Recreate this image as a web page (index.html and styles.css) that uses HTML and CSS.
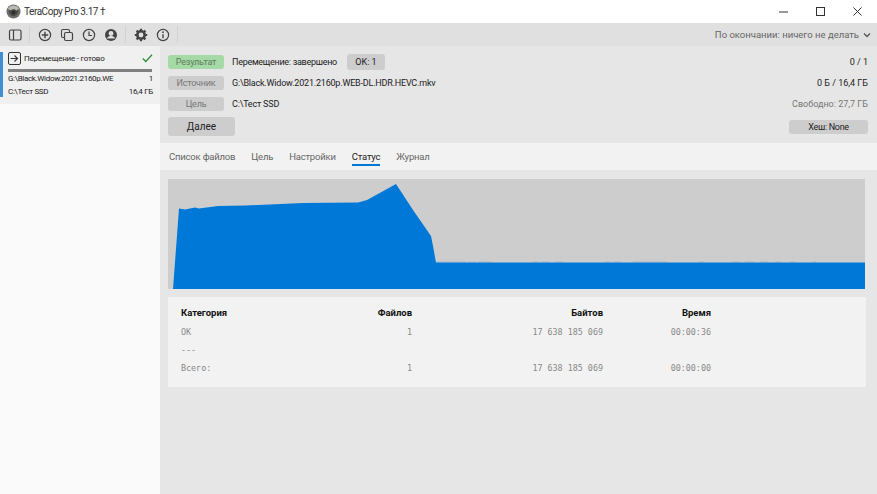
FILE: index.html
```html
<!DOCTYPE html>
<html lang="ru">
<head>
<meta charset="utf-8">
<title>TeraCopy Pro</title>
<link rel="stylesheet" href="styles.css">
</head>
<body>
<div class="app">
  <header class="titlebar">
    <div class="title-left">
      <svg class="logo" width="15" height="15" viewBox="0 0 16 16"><circle cx="8" cy="8" r="7.500" fill="#6f6f6a"/><circle cx="8" cy="8" r="5" fill="#4a4a48"/><path d="M2 5a7 7 0 0 1 12 0l-3 2a4 4 0 0 0-6 0z" fill="#b9b9b2"/><circle cx="8" cy="9" r="2" fill="#2e2e2e"/></svg>
      <span class="title-text">TeraCopy Pro 3.17 †</span>
    </div>
    <div class="win-controls">
      <svg width="10" height="10" viewBox="0 0 10 10"><path d="M0 5h9" stroke="#333" fill="none"/></svg>
      <svg width="10" height="10" viewBox="0 0 10 10"><rect x=".5" y=".5" width="8" height="8" stroke="#333" fill="none"/></svg>
      <svg width="10" height="10" viewBox="0 0 10 10"><path d="M.5.5l8 8M8.500.5l-8 8" stroke="#333" fill="none"/></svg>
    </div>
  </header>
  <nav class="toolbar">
    <div class="tool-group">
      <svg class="icon" width="14" height="14" viewBox="0 0 14 14"><rect x="1.500" y="2" width="11.500" height="10" rx="1.500" fill="none" stroke="#444" stroke-width="1.200"/><path d="M5.500 2v10" stroke="#444" stroke-width="1.200"/></svg>
    </div>
    <div class="tool-group">
      <svg class="icon" width="14" height="14" viewBox="0 0 14 14"><circle cx="7" cy="7" r="5.600" fill="none" stroke="#444" stroke-width="1.200"/><path d="M7 3.800v6.400M3.800 7h6.400" stroke="#444" stroke-width="1.400"/></svg>
      <svg class="icon" width="14" height="14" viewBox="0 0 14 14"><rect x="1.500" y="1.500" width="8" height="8" rx="1.500" fill="none" stroke="#444" stroke-width="1.100"/><rect x="4.500" y="4.500" width="8" height="8" rx="1.500" fill="#e0e0e0" stroke="#444" stroke-width="1.200"/></svg>
      <svg class="icon" width="14" height="14" viewBox="0 0 14 14"><circle cx="7" cy="7" r="5.600" fill="none" stroke="#444" stroke-width="1.200"/><path d="M7 3.500V7.500h3" fill="none" stroke="#444" stroke-width="1.200"/></svg>
      <svg class="icon" width="14" height="14" viewBox="0 0 14 14"><circle cx="7" cy="7" r="6" fill="#444"/><circle cx="7" cy="5.500" r="2.400" fill="#e0e0e0"/><path d="M2.800 10.500c1-2 2.600-2.400 4.200-2.400s3.200.4 4.200 2.400z" fill="#e0e0e0"/></svg>
    </div>
    <div class="tool-group">
      <svg class="icon" width="14" height="14" viewBox="0 0 14 14"><circle cx="7" cy="7" r="3.700" fill="none" stroke="#444" stroke-width="2.600"/><path d="M7 .8v2.500M7 10.700v2.500M.8 7h2.500M10.700 7h2.500M2.600 2.600l1.800 1.800M9.600 9.600l1.800 1.800M11.400 2.600L9.600 4.400M4.400 9.600l-1.800 1.800" stroke="#444" stroke-width="2.200"/></svg>
      <svg class="icon" width="14" height="14" viewBox="0 0 14 14"><circle cx="7" cy="7" r="5.600" fill="none" stroke="#444" stroke-width="1.200"/><path d="M7 6.200v4" stroke="#444" stroke-width="1.400"/><circle cx="7" cy="4.200" r=".9" fill="#444"/></svg>
    </div>
    <div class="after-done">По окончании: ничего не делать
      <svg width="8" height="6" viewBox="0 0 8 6"><path d="M1 1.500l3 3 3-3" fill="none" stroke="#555" stroke-width="1.300"/></svg>
    </div>
  </nav>
  <div class="body">
    <aside class="sidebar">
      <div class="job">
        <div class="job-inner">
          <div class="job-head">
            <svg width="13" height="13" viewBox="0 0 13 13"><rect x=".5" y=".5" width="12" height="12" rx="1.500" fill="none" stroke="#333"/><path d="M2.500 6.500h7M6.500 3.500l3 3-3 3" fill="none" stroke="#333" stroke-width="1.100"/></svg>
            <span class="job-name">Перемещение - готово</span>
            <svg class="check" width="11" height="9" viewBox="0 0 11 9"><path d="M.8 4.500l3 3 6.200-6.800" fill="none" stroke="#2e8b3a" stroke-width="1.300"/></svg>
          </div>
          <div class="job-bar"></div>
          <div class="job-row"><span>G:\Black.Widow.2021.2160p.WE</span><span>1</span></div>
          <div class="job-row"><span>C:\Тест SSD</span><span>16,4 ГБ</span></div>
        </div>
      </div>
    </aside>
    <main class="main">
      <section class="summary">
        <div class="sum-row">
          <span class="tag tag-green">Результат</span>
          <span class="sum-text sum-tight">Перемещение: завершено</span>
          <span class="ok">OK: 1</span>
          <span class="sum-right">0 / 1</span>
        </div>
        <div class="sum-row">
          <span class="tag">Источник</span>
          <span class="sum-text">G:\Black.Widow.2021.2160p.WEB-DL.HDR.HEVC.mkv</span>
          <span class="sum-right">0 Б / 16,4 ГБ</span>
        </div>
        <div class="sum-row">
          <span class="tag">Цель</span>
          <span class="sum-text">C:\Тест SSD</span>
          <span class="sum-right sum-muted">Свободно: 27,7 ГБ</span>
        </div>
        <div class="sum-row sum-row-last">
          <span class="next">Далее</span>
          <span class="hash">Хеш: None</span>
        </div>
      </section>
      <div class="tabs">
        <span class="tab">Список файлов</span>
        <span class="tab">Цель</span>
        <span class="tab">Настройки</span>
        <span class="tab tab-active">Статус</span>
        <span class="tab">Журнал</span>
      </div>
      <section class="content">
        <svg class="chart" width="697" height="110" viewBox="168 179 697 110" preserveAspectRatio="none">
          <rect x="168" y="179" width="697" height="110" fill="#cdcdcd"/>
          <polygon fill="#0078d7" points="173,289 179,208.500 185,209.500 195,207.500 199,208.500 218,206 245,205.500 258,205 303,203 358,202.500 367,200 396,184 413,210 431,236 433,246 436,262.500 865,262.500 865,289"/>
          <path d="M436 262h30M468 262h8M478 262h14M533 262h5M541 262h9M555 262h8M605 262h6M613 262h8M633 262h34M698 262h6M732 262h8M745 262h9M760 262h8M775 262h6M790 262h5M813 262h3" stroke="#0078d7" stroke-opacity=".2" fill="none"/>
        </svg>
        <div class="stats">
          <div class="stats-grid">
            <span class="th">Категория</span><span class="th r">Файлов</span><span class="th r">Байтов</span><span class="th r">Время</span>
            <span class="td">OK</span><span class="td r">1</span><span class="td r">17 638 185 069</span><span class="td r">00:00:36</span>
            <span class="td">---</span><span class="td r"></span><span class="td r"></span><span class="td r"></span>
            <span class="td">Всего:</span><span class="td r">1</span><span class="td r">17 638 185 069</span><span class="td r">00:00:00</span>
          </div>
        </div>
      </section>
    </main>
  </div>
</div>
</body>
</html>
```

FILE: styles.css
```css
* { box-sizing: border-box; }
html, body { margin: 0; height: 100%; }
body { font-family: Roboto, "Open Sans", sans-serif; font-size: 9px; color: #222; background: #fff; overflow: hidden; }
.app { display: flex; flex-direction: column; width: 877px; height: 494px; }
.titlebar { height: 23px; display: flex; align-items: center; justify-content: space-between; background: #fff; padding-left: 6px; flex: none; }
.title-left { display: flex; align-items: center; gap: 3px; }
.title-text { font-size: 10px; letter-spacing: -.45px; color: #333; }
.win-controls { display: flex; gap: 27px; padding-right: 14px; align-items: center; }
.toolbar { height: 23px; background: #e0e0e0; display: flex; align-items: center; flex: none; padding-left: 8px; }
.tool-group { display: flex; align-items: center; gap: 8px; padding-right: 7px; margin-right: 8px; height: 17px; border-right: 1px solid #d2d2d2; }
.after-done { margin-left: auto; color: #666; font-size: 9.500px; padding-right: 6px; display: flex; align-items: center; gap: 4px; }
.body { flex: 1; display: flex; min-height: 0; }
.sidebar { width: 160px; background: #fafafa; flex: none; }
.job { height: 58px; background: #f0f0f0; padding-top: 6px; }
.job-inner { border-left: 3px solid #3f8fd2; padding: 0 4px 0 5px; height: 45px; }
.job-head { display: flex; align-items: center; gap: 3px; height: 13px; font-size: 8px; letter-spacing: -.2px; color: #222; }
.job-name { flex: 1; }
.check { margin-right: 3px; }
.job-bar { height: 3px; background: #808080; margin: 4px 0 0; width: 144px; }
.job-row { display: flex; justify-content: space-between; width: 145px; font-size: 8px; letter-spacing: -.33px; height: 13px; align-items: center; }
.main { flex: 1; background: #e6e6e6; display: flex; flex-direction: column; min-width: 0; }
.summary { height: 97px; padding: 8px 9px 0 8px; display: flex; flex-direction: column; flex: none; }
.sum-row { display: flex; align-items: center; height: 15px; margin-bottom: 6px; }
.sum-row-last { height: 19px; margin: 0; }
.tag { width: 56px; height: 14px; border-radius: 3px; background: #cdcdcd; color: #777; font-size: 9px; letter-spacing: -.2px; display: flex; align-items: center; justify-content: center; margin-right: 8px; }
.tag-green { background: #a5d9a5; color: #5d7f5d; }
.sum-text { font-size: 9px; letter-spacing: -.2px; color: #222; }
.sum-tight { letter-spacing: -.28px; }
.ok { margin-left: 10px; width: 38px; height: 16px; border-radius: 3px; background: #cdcdcd; display: flex; align-items: center; justify-content: center; font-size: 9px; }
.sum-right { margin-left: auto; font-size: 9px; color: #222; }
.sum-muted { color: #777; }
.next { width: 67px; height: 19px; background: #cdcdcd; border-radius: 3px; display: flex; align-items: center; justify-content: center; font-size: 10px; }
.hash { margin-left: auto; width: 79px; height: 14px; background: #cdcdcd; border-radius: 3px; display: flex; align-items: center; justify-content: center; font-size: 9px; letter-spacing: -.3px; }
.tabs { height: 27px; background: #f2f2f2; display: flex; align-items: center; gap: 16px; padding-left: 9px; flex: none; font-size: 9.500px; letter-spacing: -.2px; color: #666; }
.tab { height: 27px; display: flex; align-items: center; position: relative; }
.tab-active { color: #222; }
.tab-active::after { content: ""; position: absolute; left: 0; right: 0; bottom: 4px; height: 2px; background: #0078d7; }
.content { flex: 1; padding: 9px 12px 0 8px; display: flex; flex-direction: column; gap: 8px; }
.chart { display: block; flex: none; }
.stats { height: 90px; background: #f2f2f2; padding: 5px 0 0 13px; width: 698px; }
.stats-grid { display: grid; grid-template-columns: 130px 101px 191px 108px; grid-template-rows: 21px 18px 18px 18px; align-items: center; }
.th { font-weight: 700; font-size: 9.500px; color: #111; }
.td { font-family: "DejaVu Sans Mono", monospace; font-size: 8.400px; color: #888; }
.r { text-align: right; }
```
